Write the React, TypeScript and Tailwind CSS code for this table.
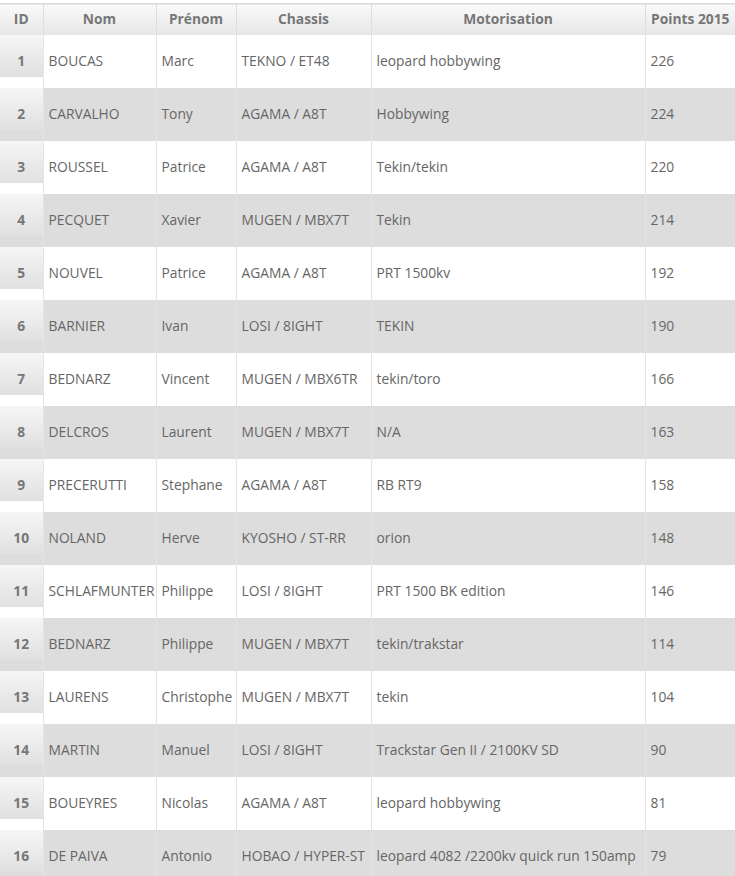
import React from 'react';

type Pilote = {
  id: number;
  nom: string;
  prenom: string;
  chassis: string;
  moteur: string;
  points: number;
};

const pilotes: Pilote[] = [
  { id: 1, nom: 'BOUCAS', prenom: 'Marc', chassis: 'TEKNO / ET48', moteur: 'leopard hobbywing', points: 226 },
  { id: 2, nom: 'CARVALHO', prenom: 'Tony', chassis: 'AGAMA / A8T', moteur: 'Hobbywing', points: 224 },
  { id: 3, nom: 'ROUSSEL', prenom: 'Patrice', chassis: 'AGAMA / A8T', moteur: 'Tekin/tekin', points: 220 },
  { id: 4, nom: 'PECQUET', prenom: 'Xavier', chassis: 'MUGEN / MBX7T', moteur: 'Tekin', points: 214 },
  { id: 5, nom: 'NOUVEL', prenom: 'Patrice', chassis: 'AGAMA / A8T', moteur: 'PRT 1500kv', points: 192 },
  { id: 6, nom: 'BARNIER', prenom: 'Ivan', chassis: 'LOSI / 8IGHT', moteur: 'TEKIN', points: 190 },
  { id: 7, nom: 'BEDNARZ', prenom: 'Vincent', chassis: 'MUGEN / MBX6TR', moteur: 'tekin/toro', points: 166 },
  { id: 8, nom: 'DELCROS', prenom: 'Laurent', chassis: 'MUGEN / MBX7T', moteur: 'N/A', points: 163 },
  { id: 9, nom: 'PRECERUTTI', prenom: 'Stephane', chassis: 'AGAMA / A8T', moteur: 'RB RT9', points: 158 },
  { id: 10, nom: 'NOLAND', prenom: 'Herve', chassis: 'KYOSHO / ST-RR', moteur: 'orion', points: 148 },
  { id: 11, nom: 'SCHLAFMUNTER', prenom: 'Philippe', chassis: 'LOSI / 8IGHT', moteur: 'PRT 1500 BK edition', points: 146 },
  { id: 12, nom: 'BEDNARZ', prenom: 'Philippe', chassis: 'MUGEN / MBX7T', moteur: 'tekin/trakstar', points: 114 },
  { id: 13, nom: 'LAURENS', prenom: 'Christophe', chassis: 'MUGEN / MBX7T', moteur: 'tekin', points: 104 },
  { id: 14, nom: 'MARTIN', prenom: 'Manuel', chassis: 'LOSI / 8IGHT', moteur: 'Trackstar Gen II / 2100KV SD', points: 90 },
  { id: 15, nom: 'BOUEYRES', prenom: 'Nicolas', chassis: 'AGAMA / A8T', moteur: 'leopard hobbywing', points: 81 },
  { id: 16, nom: 'DE PAIVA', prenom: 'Antonio', chassis: 'HOBAO / HYPER-ST', moteur: 'leopard 4082 /2200kv quick run 150amp', points: 79 },
];

const cellCls = 'h-[53px] px-[5px] border-r border-[#e4e4e4] align-middle text-left whitespace-nowrap overflow-hidden';
const headCls = 'h-[31px] border-r border-[#dedede] text-center font-bold text-[#777] whitespace-nowrap';

const App: React.FC = () => {
  return (
    <div className="w-[735px] h-[876px] overflow-hidden bg-white pt-[3px] font-['Open_Sans','Liberation_Sans',sans-serif] text-[13.8px] text-[#666]">
      <table className="w-[735px] table-fixed border-collapse">
        <colgroup>
          <col className="w-[43px]" />
          <col className="w-[113px]" />
          <col className="w-[80px]" />
          <col className="w-[135px]" />
          <col className="w-[274px]" />
          <col className="w-[90px]" />
        </colgroup>
        <thead>
          <tr className="border-t border-[#dcdcdc] bg-gradient-to-b from-[#fafafa] to-[#e6e6e6]">
            <th className={headCls}>ID</th>
            <th className={headCls}>Nom</th>
            <th className={headCls}>Prénom</th>
            <th className={headCls}>Chassis</th>
            <th className={headCls}>Motorisation</th>
            <th className="h-[31px] text-center font-bold text-[#777] whitespace-nowrap">Points 2015</th>
          </tr>
        </thead>
        <tbody>
          {pilotes.map((p, i) => (
            <tr key={p.id} className={i % 2 === 0 ? 'bg-white' : 'bg-[#dddddd]'}>
              {/* cellule ID avec dégradé sur le haut */}
              <td className="h-[53px] border-r border-[#e4e4e4] text-center font-bold text-[#777] bg-no-repeat bg-[length:100%_42px] bg-[linear-gradient(to_bottom,#f6f6f6,#e0e0e0)]">
                {p.id}
              </td>
              <td className={cellCls}>{p.nom}</td>
              <td className={cellCls}>{p.prenom}</td>
              <td className={cellCls}>{p.chassis}</td>
              <td className={cellCls}>{p.moteur}</td>
              <td className="h-[53px] px-[5px] align-middle text-left">{p.points}</td>
            </tr>
          ))}
        </tbody>
      </table>
    </div>
  );
};

export default App;
